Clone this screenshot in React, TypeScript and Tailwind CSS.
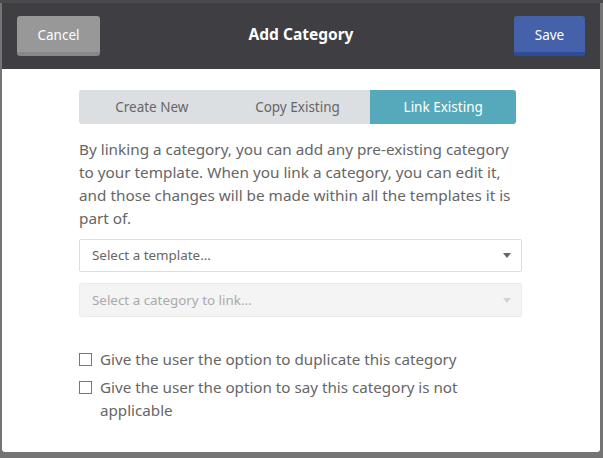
import { useState } from 'react'

const font = { fontFamily: '"Noto Sans", "Open Sans", sans-serif' }

function Caret({ light }: { light?: boolean }) {
  return (
    <svg width="8" height="5" viewBox="0 0 8 5" className="shrink-0">
      <path d="M0 0 L8 0 L4 5 Z" fill={light ? '#d4d4d4' : '#666'} />
    </svg>
  )
}

export default function App() {
  const [tab, setTab] = useState(2)
  const [dup, setDup] = useState(false)
  const [na, setNa] = useState(false)
  const tabs = ['Create New', 'Copy Existing', 'Link Existing']

  return (
    <div className="w-[603px] h-[458px] bg-[#747474] overflow-hidden" style={font}>
      <div className="h-[3px] bg-[#4a4a4d]" />
      <div className="mx-[2px] w-[598px] h-[449px] bg-white rounded-b-[3px] overflow-hidden flex flex-col">
        {/* header */}
        <div className="h-[66px] bg-[#3e3e43] grid grid-cols-[1fr_auto_1fr] items-center px-[15px]">
          <button className="justify-self-start w-[83px] h-[40px] rounded-[3px] bg-[#989898] border-b-[4px] border-[#878787] text-white text-[13.5px] pt-[3px] cursor-pointer">
            Cancel
          </button>
          <div className="text-white text-[15.5px] font-bold mt-[-3px]">Add Category</div>
          <button className="justify-self-end w-[71px] h-[40px] rounded-[3px] bg-[#4561a9] border-b-[4px] border-[#2f4c9b] text-white text-[13.5px] pt-[3px] cursor-pointer">
            Save
          </button>
        </div>

        {/* body */}
        <div className="pl-[77px] pr-[84px] pt-[21px]">
          <div className="flex h-[34px] rounded-[3px] overflow-hidden bg-[#dcdfe2]">
            {tabs.map((t, i) => (
              <button
                key={t}
                onClick={() => setTab(i)}
                className={`flex-1 text-[13.5px] cursor-pointer ${tab === i ? 'bg-[#56a8bb] text-white' : 'text-[#666]'}`}
              >
                {t}
              </button>
            ))}
          </div>

          <p className="mt-[14px] text-[15.3px] leading-[23px] text-[#666]">
            By linking a category, you can add any pre-existing category to your template. When you link a category, you can edit it, and those changes will be made within all the templates it is part of.
          </p>

          <div className="mt-[9px] mr-[-6px] h-[33px] border border-[#dedede] rounded-[2px] flex items-center justify-between pl-[12px] pr-[10px] text-[13.4px] text-[#666]">
            <span>Select a template...</span>
            <Caret />
          </div>
          <div className="mt-[11px] mr-[-6px] h-[34px] border border-[#ececec] bg-[#f4f4f4] rounded-[2px] flex items-center justify-between pl-[12px] pr-[10px] text-[13.4px] text-[#aaa]">
            <span>Select a category to link...</span>
            <Caret light />
          </div>

          <div className="mt-[31px] flex flex-col gap-[5px] text-[15.2px] leading-[23px] text-[#666]">
            <label className="flex items-start gap-[8px] cursor-pointer" onClick={() => setDup(v => !v)}>
              <span className={`mt-[5px] w-[13px] h-[13px] border border-[#777] shrink-0 ${dup ? 'bg-[#56a8bb]' : 'bg-white'}`} />
              <span className="max-w-[372px]">Give the user the option to duplicate this category</span>
            </label>
            <label className="flex items-start gap-[8px] cursor-pointer" onClick={() => setNa(v => !v)}>
              <span className={`mt-[5px] w-[13px] h-[13px] border border-[#777] shrink-0 ${na ? 'bg-[#56a8bb]' : 'bg-white'}`} />
              <span className="max-w-[372px]">Give the user the option to say this category is not applicable</span>
            </label>
          </div>
        </div>
      </div>
    </div>
  )
}
